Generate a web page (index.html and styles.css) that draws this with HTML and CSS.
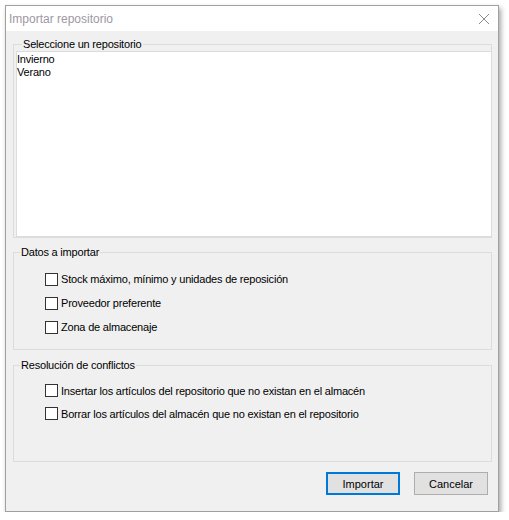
FILE: index.html
```html
<!DOCTYPE html>
<html lang="es">
<head>
    <meta charset="UTF-8">
    <title>Importar repositorio</title>
    <link rel="stylesheet" href="styles.css">
</head>
<body>
    <div class="window">
        <div class="titlebar">
            <span class="title">Importar repositorio</span>
            <svg class="close" width="12" height="12" viewBox="0 0 12 12">
                <path d="M1 1 L11 11 M11 1 L1 11" stroke="#8c8c8c" stroke-width="1" fill="none"/>
            </svg>
        </div>

        <div class="content">
            <fieldset class="group group-list">
                <legend>Seleccione un repositorio</legend>
                <div class="listbox">
                    <div class="item">Invierno</div>
                    <div class="item">Verano</div>
                </div>
            </fieldset>

            <fieldset class="group group-data">
                <legend>Datos a importar</legend>
                <label class="check"><span class="box"></span>Stock máximo, mínimo y unidades de reposición</label>
                <label class="check"><span class="box"></span>Proveedor preferente</label>
                <label class="check"><span class="box"></span>Zona de almacenaje</label>
            </fieldset>

            <fieldset class="group group-conflicts">
                <legend>Resolución de conflictos</legend>
                <label class="check"><span class="box"></span>Insertar los artículos del repositorio que no existan en el almacén</label>
                <label class="check"><span class="box"></span>Borrar los artículos del almacén que no existan en el repositorio</label>
            </fieldset>

            <div class="buttons">
                <button class="btn btn-default">Importar</button>
                <button class="btn">Cancelar</button>
            </div>
        </div>
    </div>
</body>
</html>
```

FILE: styles.css
```css
body {
    margin: 0;
    padding: 5px 0 0 5px;
    background-color: #ffffff;
    font-family: "Liberation Sans", Arial, sans-serif;
    font-size: 11px;
    letter-spacing: -0.2px;
    color: #000000;
}
.window {
    width: 492px;
    height: 505px;
    border: 1px solid #a0a0a0;
    background-color: #f0f0f0;
    box-shadow: 2px 3px 5px rgba(0, 0, 0, 0.35);
    display: flex;
    flex-direction: column;
}
.titlebar {
    height: 25px;
    background-color: #ffffff;
    display: flex;
    align-items: center;
    justify-content: space-between;
    padding: 0 8px 0 3px;
}
.title {
    font-size: 12px;
    letter-spacing: 0;
    color: #9d98a3;
}
.close {
    display: block;
}
.content {
    padding: 7px 6px 0 7px;
}
.group {
    margin: 0;
    padding: 0;
    min-width: 0;
    border: 1px solid #dcdcdc;
}
.group legend {
    margin-left: 6px;
    padding: 0 1px;
    line-height: 13px;
    height: 13px;
}
.group-list {
    padding: 0 0 0 2px;
}
.listbox {
    height: 183px;
    background-color: #ffffff;
    border: 1px solid #dcdcdc;
    border-right: none;
    padding-top: 1px;
}
.item {
    line-height: 13px;
}
.group-data {
    margin-top: 8px;
    padding: 8px 0 10px 0;
}
.group-data .check {
    height: 24px;
}
.group-conflicts {
    margin-top: 9px;
    padding: 7px 0 36px 0;
}
.check {
    display: flex;
    align-items: center;
    height: 23px;
    margin-left: 31px;
}
.box {
    width: 11px;
    height: 11px;
    border: 1px solid #333333;
    background-color: #ffffff;
    margin-right: 3px;
}
.buttons {
    display: flex;
    justify-content: flex-end;
    gap: 14px;
    margin-top: 10px;
    margin-right: 4px;
}
.btn {
    width: 74px;
    height: 23px;
    background-color: #e1e1e1;
    border: 1px solid #adadad;
    font-family: "Liberation Sans", Arial, sans-serif;
    font-size: 11px;
    color: #000000;
    padding: 0;
}
.btn-default {
    border: 2px solid #0078d7;
}
```
